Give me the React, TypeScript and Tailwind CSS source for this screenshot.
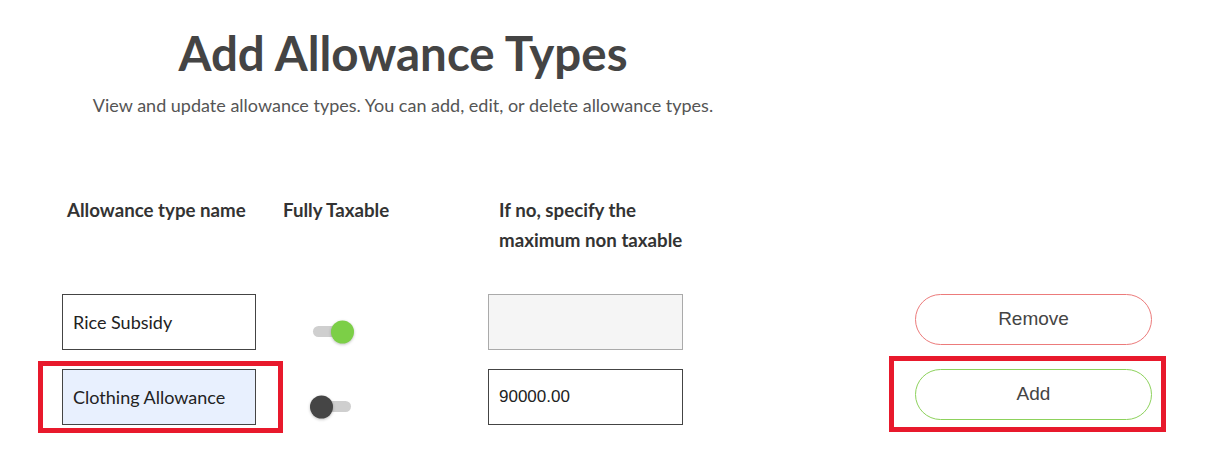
import React from "react";

const rows = [
  { name: "Rice Subsidy", taxable: true, amount: "", action: "Remove" },
  { name: "Clothing Allowance", taxable: false, amount: "90000.00", action: "Add" },
];

function Toggle({ on }: { on: boolean }) {
  return (
    <div className="relative ml-[30px] mt-[32px] h-[11px] w-[38px] rounded-full bg-[#cfcfcf]">
      <div
        className={
          on
            ? "absolute right-[-3px] top-1/2 h-[23px] w-[23px] -translate-y-1/2 rounded-full bg-[#7ccf47] shadow-[0_1px_3px_rgba(0,0,0,0.25)]"
            : "absolute left-[-3px] top-1/2 h-[23px] w-[23px] -translate-y-1/2 rounded-full bg-[#454545] shadow-[0_1px_3px_rgba(0,0,0,0.25)]"
        }
      />
    </div>
  );
}

export default function App() {
  return (
    <div className="h-[460px] w-[1207px] bg-white font-['Lato',sans-serif] text-[#444]">
      <div className="w-[806px] pt-[25px] text-center">
        <h1 className="text-[47.5px] font-bold leading-[56px] text-[#444]">Add Allowance Types</h1>
        <p className="mt-[12px] text-[18px] leading-[24px] text-[#555]">
          View and update allowance types. You can add, edit, or delete allowance types.
        </p>
      </div>

      <div className="mt-[78px] flex pl-[62px] text-[18.7px] font-bold leading-[30px] text-[#333]">
        <div className="w-[221px] pl-[5px]">Allowance type name</div>
        <div className="w-[205px]">Fully Taxable</div>
        <div className="w-[220px] pl-[11px]">
          If no, specify the
          <br />
          maximum non taxable
        </div>
      </div>

      <div className="mt-[39px] flex flex-col gap-[19px] pl-[62px]">
        {rows.map((r) => (
          <div key={r.name} className="flex items-start">
            <div className="w-[221px]">
              <div className="relative w-[194px]">
                <input
                  readOnly
                  value={r.name}
                  className={
                    r.taxable
                      ? "h-[56px] w-[194px] border border-[#444] bg-white px-[10px] text-[18px] text-[#222] outline-none"
                      : "h-[56px] w-[194px] border border-[#444] bg-[#e8f0fe] px-[10px] text-[18px] text-[#222] outline-none"
                  }
                />
                {!r.taxable && (
                  <div className="pointer-events-none absolute bottom-[-8px] left-[-24px] right-[-27px] top-[-8px] border-[5px] border-[#e8192c]" />
                )}
              </div>
            </div>
            <div className="w-[205px]">
              <Toggle on={r.taxable} />
            </div>
            <div className="w-[427px]">
              {r.taxable ? (
                <div className="h-[56px] w-[195px] border border-[#aaa] bg-[#f5f5f5]" />
              ) : (
                <input
                  readOnly
                  value={r.amount}
                  className="h-[56px] w-[195px] border border-[#444] bg-white px-[10px] font-['Liberation_Sans',Arial,sans-serif] text-[17px] text-[#222] outline-none"
                />
              )}
            </div>
            <div className="relative w-[237px]">
              <button
                className={
                  r.taxable
                    ? "h-[51px] w-[237px] rounded-full border border-[#ec7b7b] bg-white font-['Liberation_Sans',Arial,sans-serif] text-[19px] text-[#444]"
                    : "h-[51px] w-[237px] rounded-full border border-[#8dd25c] bg-white font-['Liberation_Sans',Arial,sans-serif] text-[19px] text-[#444]"
                }
              >
                {r.action}
              </button>
              {!r.taxable && (
                <div className="pointer-events-none absolute bottom-[-12px] left-[-26px] right-[-14px] top-[-13px] border-[5px] border-[#e8192c]" />
              )}
            </div>
          </div>
        ))}
      </div>
    </div>
  );
}
